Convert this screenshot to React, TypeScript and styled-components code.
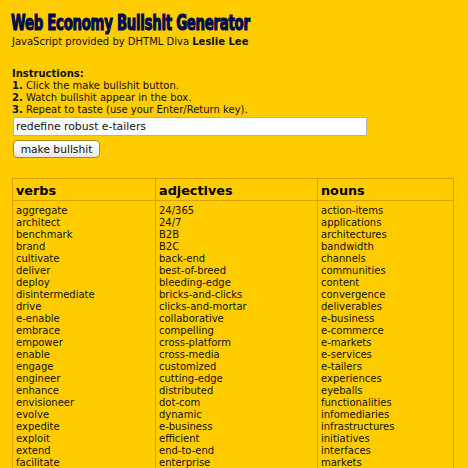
import React from "react";
import styled, { createGlobalStyle } from "styled-components";

const Global = createGlobalStyle`
  html, body { margin: 0; padding: 0; background: #ffcc00; overflow: hidden; }
  #root { height: 468px; overflow: hidden; }
`;

const Page = styled.div`
  height: 468px;
  overflow: hidden;
  padding: 12px 13px 0 12px;
  box-sizing: border-box;
  font-family: "DejaVu Sans", Verdana, sans-serif;
  font-size: 10px;
  line-height: 12px;
  color: #111;
  background: #ffcc00;
`;

const Title = styled.h1`
  margin: 0 0 0 -1px;
  font-family: "DejaVu Sans Condensed", "DejaVu Sans", sans-serif;
  font-size: 21px;
  line-height: 23px;
  height: 23px;
  font-weight: 700;
  color: #000a50;
  letter-spacing: -0.4px;
  -webkit-text-stroke: 1.1px #000a50;
  white-space: nowrap;
  transform: scaleX(0.705);
  transform-origin: left center;
`;

const Byline = styled.p`
  margin: 1px 0 20px;
  height: 12px;
`;

const Instructions = styled.div`
  margin: 0;
`;

const Line = styled.div`
  height: 12px;
`;

const TextField = styled.input`
  display: block;
  box-sizing: border-box;
  width: 354px;
  height: 19px;
  margin: 1px 0 4px 1px;
  padding: 0 2px;
  border: 1px solid #b0b0c0;
  background: #fff;
  font-family: inherit;
  font-size: 10.8px;
  color: #111;
  outline: none;
`;

const MakeButton = styled.button`
  display: block;
  box-sizing: border-box;
  width: 87px;
  height: 18px;
  margin: 0 0 20px 1px;
  padding: 0;
  border: 1px solid #b08a10;
  border-radius: 4px;
  background: linear-gradient(#ffffff, #f4f4f4 60%, #e6e6e6);
  font-family: inherit;
  font-size: 10.7px;
  color: #111;
`;

const WordTable = styled.div`
  display: grid;
  grid-template-columns: 143px 162px 136px;
  width: 442px;
  box-sizing: border-box;
  border-top: 1px solid #d9a300;
  border-left: 1px solid #d9a300;
  border-right: 1px solid #d9a300;
`;

const Head = styled.div<{ $last?: boolean }>`
  height: 22px;
  box-sizing: border-box;
  padding: 4px 3px 0;
  font-size: 12.8px;
  line-height: 15px;
  font-weight: 700;
  color: #000;
  border-bottom: 1px solid #d9a300;
  border-right: ${(p) => (p.$last ? "none" : "1px solid #d9a300")};
`;

const Col = styled.div<{ $last?: boolean }>`
  padding: 4px 3px 0;
  border-right: ${(p) => (p.$last ? "none" : "1px solid #d9a300")};
`;

const verbs = ["aggregate","architect","benchmark","brand","cultivate","deliver","deploy","disintermediate","drive","e-enable","embrace","empower","enable","engage","engineer","enhance","envisioneer","evolve","expedite","exploit","extend","facilitate"];
const adjectives = ["24/365","24/7","B2B","B2C","back-end","best-of-breed","bleeding-edge","bricks-and-clicks","clicks-and-mortar","collaborative","compelling","cross-platform","cross-media","customized","cutting-edge","distributed","dot-com","dynamic","e-business","efficient","end-to-end","enterprise"];
const nouns = ["action-items","applications","architectures","bandwidth","channels","communities","content","convergence","deliverables","e-business","e-commerce","e-markets","e-services","e-tailers","experiences","eyeballs","functionalities","infomediaries","infrastructures","initiatives","interfaces","markets"];

export default function App() {
  return (
    <Page>
      <Global />
      <Title>Web Economy Bullshit Generator</Title>
      <Byline>JavaScript provided by DHTML Diva <b>Leslie Lee</b></Byline>
      <Instructions>
        <Line><b>Instructions:</b></Line>
        <Line><b>1.</b> Click the make bullshit button.</Line>
        <Line><b>2.</b> Watch bullshit appear in the box.</Line>
        <Line><b>3.</b> Repeat to taste (use your Enter/Return key).</Line>
      </Instructions>
      <TextField readOnly value="redefine robust e-tailers" />
      <MakeButton>make bullshit</MakeButton>
      <WordTable>
        <Head>verbs</Head>
        <Head>adjectives</Head>
        <Head $last>nouns</Head>
        <Col>{verbs.map((w) => <Line key={w}>{w}</Line>)}</Col>
        <Col>{adjectives.map((w) => <Line key={w}>{w}</Line>)}</Col>
        <Col $last>{nouns.map((w) => <Line key={w}>{w}</Line>)}</Col>
      </WordTable>
    </Page>
  );
}
